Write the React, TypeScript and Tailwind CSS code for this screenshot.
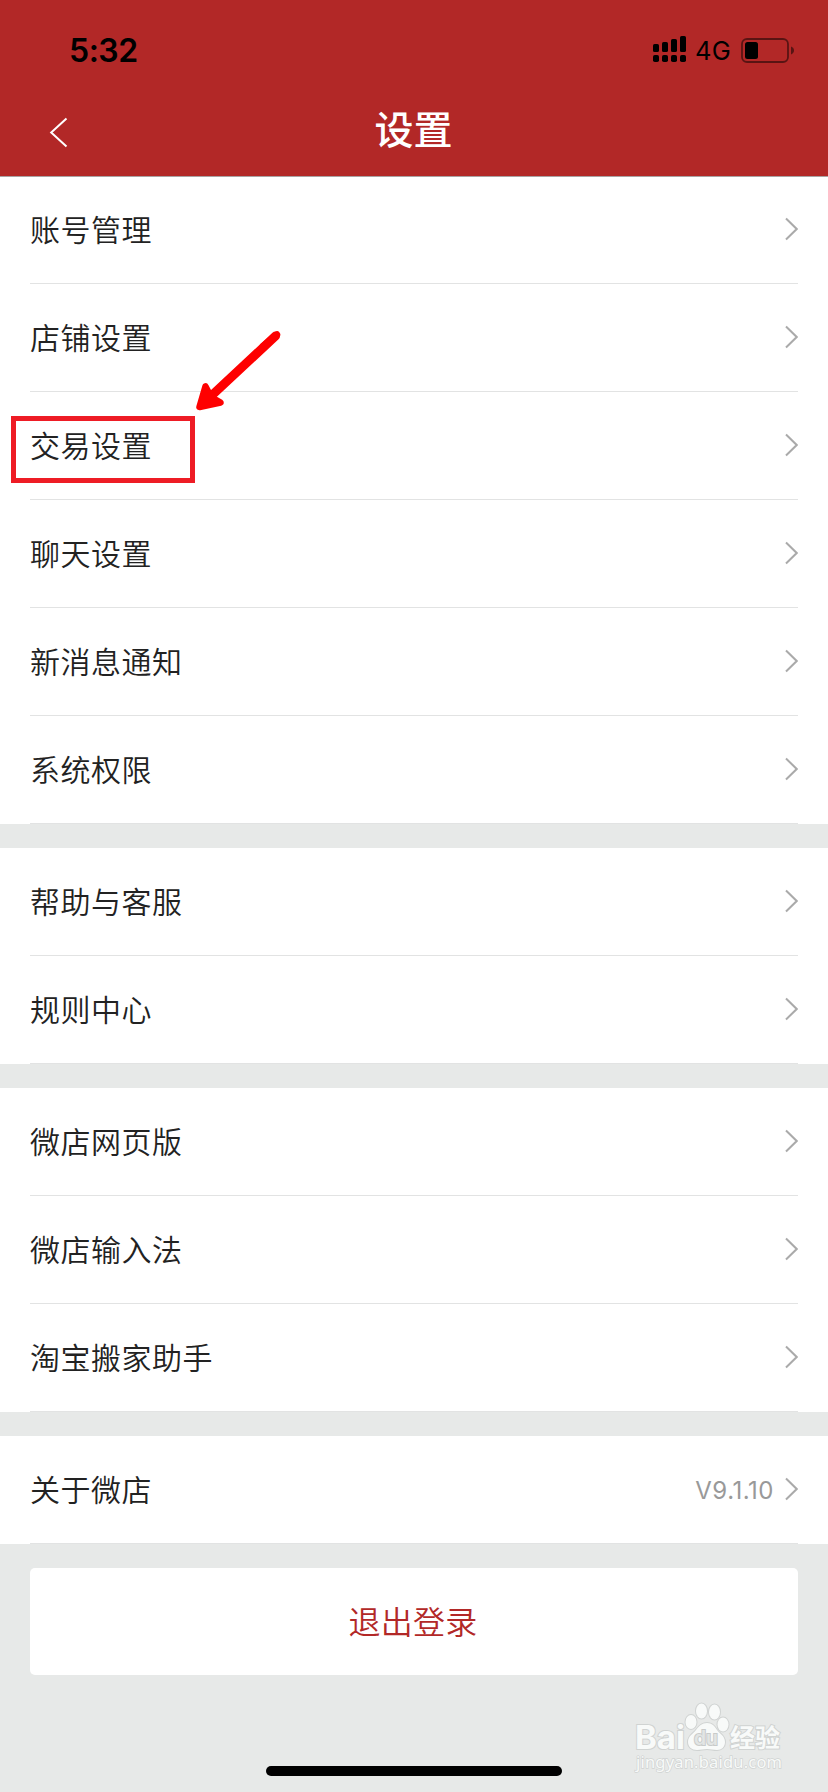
type Item = {
  label: string;
  value?: string;
};

const groups: Item[][] = [
  [
    { label: "账号管理" },
    { label: "店铺设置" },
    { label: "交易设置" },
    { label: "聊天设置" },
    { label: "新消息通知" },
    { label: "系统权限" },
  ],
  [{ label: "帮助与客服" }, { label: "规则中心" }],
  [{ label: "微店网页版" }, { label: "微店输入法" }, { label: "淘宝搬家助手" }],
  [{ label: "关于微店", value: "V9.1.10" }],
];

function StatusBar() {
  return (
    <div className="flex h-[100px] items-center justify-between pl-[69px] pr-[33px] font-['Inter',sans-serif] text-black">
      <span className="pt-px text-[32px] font-semibold leading-none tracking-[-0.5px]">5:32</span>
      <div className="flex items-center pb-px">
        <svg className="h-[27px] w-[33px]" viewBox="0 0 33 27">
          <rect x="0" y="8" width="6" height="8" rx="1.6" />
          <rect x="9" y="6" width="6" height="10" rx="1.6" />
          <rect x="18" y="3" width="6" height="13" rx="1.6" />
          <rect x="27" y="0" width="6" height="16" rx="1.6" />
          <rect x="0" y="19" width="6" height="7" rx="1.8" />
          <rect x="9" y="19" width="6" height="7" rx="1.8" />
          <rect x="18" y="19" width="6" height="7" rx="1.8" />
          <rect x="27" y="19" width="6" height="7" rx="1.8" />
        </svg>
        <span className="ml-[9px] w-[36px] pt-[2px] text-[25.5px] leading-none tracking-[0.4px]">4G</span>
        <svg className="ml-[10px] mt-px h-[25px] w-[54px]" viewBox="0 0 54 25">
          <rect x="1" y="1" width="46" height="23" rx="5" fill="none" stroke="#000" strokeOpacity="0.5" strokeWidth="1.8" />
          <rect x="4" y="4" width="13" height="17" rx="2.5" />
          <path d="M50 8.500c2 .8 3 2.200 3 4s-1 3.200-3 4z" fillOpacity="0.5" />
        </svg>
      </div>
    </div>
  );
}

function Header() {
  return (
    <header className="relative z-10 h-[177px] border-b border-[#a9a3a3] bg-[#b22827]">
      <StatusBar />
      <div className="grid h-[64px] grid-cols-3 items-center">
        <svg className="ml-[49px] h-[31px] w-[19px]" viewBox="0 0 19 31" fill="none" stroke="#fff" strokeWidth="2">
          <path d="M17.500 1.500 2.200 15.500l15.300 14" />
        </svg>
        <h1 className="pb-[9px] pr-px text-center text-[39px] font-medium leading-none text-white">设置</h1>
      </div>
    </header>
  );
}

function Row({ label, value }: Item) {
  return (
    <div className="mx-[30px] flex h-[108px] items-center justify-between border-b border-[#e2e3e3]">
      <span className="pb-[3px] text-[30px] font-[350] leading-none tracking-[0.5px] text-[#222]">{label}</span>
      <div className="flex items-center gap-[11px]">
        {value && (
          <span className="pt-[2px] font-['Inter',sans-serif] text-[24px] leading-none tracking-[0.5px] text-[#999]">{value}</span>
        )}
        <svg className="mb-[2px] h-[24px] w-[13px]" viewBox="0 0 13 24" fill="none" stroke="#aaa" strokeWidth="2">
          <path d="M1 1.500 11.700 12 1 22.500" />
        </svg>
      </div>
    </div>
  );
}

// Hand-drawn marker around the highlighted row
function Marker() {
  return (
    <>
      <div className="absolute left-[11px] top-[416px] z-20 h-[67px] w-[184px] border-5 border-[#ee1c25]" />
      <svg
        className="absolute left-[190px] top-[325px] z-20 h-[90px] w-[100px]"
        viewBox="0 0 100 90"
        fill="#fe0000"
        stroke="#fe0000"
        strokeLinecap="round"
        strokeLinejoin="round"
      >
        <path d="M87 9.500 73 21" fill="none" stroke="#fe0000" strokeWidth="6.500" />
        <path d="M85.500 11 19 73" fill="none" strokeWidth="9" />
        <path d="M15.500 61.500 9.500 82 30.500 77.500 21 72z" strokeWidth="6.500" />
      </svg>
    </>
  );
}

function Watermark() {
  return (
    <svg
      className="absolute left-[620px] top-[1690px] h-[90px] w-[180px]"
      viewBox="0 0 180 90"
      fill="#f8faf9"
      stroke="#d0d3d2"
      strokeWidth="2"
      paintOrder="stroke"
    >
      <text x="15" y="59" textLength="50" lengthAdjust="spacingAndGlyphs" fontFamily="Inter, sans-serif" fontSize="33" fontWeight="700">
        Bai
      </text>
      <ellipse cx="71" cy="32" rx="5.500" ry="7" />
      <ellipse cx="81.500" cy="21" rx="5.500" ry="7.500" />
      <ellipse cx="94.500" cy="22" rx="5.500" ry="7.500" />
      <ellipse cx="103" cy="34.500" rx="5.500" ry="7" />
      <path d="M87 33c5 0 7.500 3 10 7 3 4 8 6 8 12 0 5-3.500 8-8 8-4 0-6-1-10-1s-6 1-10 1c-5 0-9-3-9-8 0-6 5-8 8-12 3-4 6-7 11-7z" />
      <text x="74" y="55" textLength="24" lengthAdjust="spacingAndGlyphs" fontFamily="Inter, sans-serif" fontSize="20" fontWeight="600" fill="#e2e5e4" stroke="#c8cbca">
        du
      </text>
      <text x="110" y="57" textLength="50" lengthAdjust="spacingAndGlyphs" fontFamily="Noto Sans CJK SC, sans-serif" fontSize="25" fontWeight="700">
        经验
      </text>
      <text x="16" y="78" textLength="146" fontFamily="Noto Sans, sans-serif" fontSize="16.500" strokeWidth="1.4">
        jingyan.baidu.com
      </text>
    </svg>
  );
}

export default function App() {
  return (
    <div className="relative flex h-[1792px] w-[828px] flex-col overflow-hidden bg-[#e7e9e8] font-['Noto_Sans_CJK_SC',sans-serif]">
      <Header />

      {/* The list starts under the header's hairline */}
      <main className="-mt-px flex flex-col gap-6">
        {groups.map((items, i) => (
          <section key={i} className="bg-white">
            {items.map((item) => (
              <Row key={item.label} {...item} />
            ))}
          </section>
        ))}
        <button className="mx-[30px] h-[107px] rounded-[5px] bg-white pb-[4px] pr-[2px] text-[32px] font-[350] leading-none tracking-[0.3px] text-[#b22827]">
          退出登录
        </button>
      </main>

      <div className="mb-4 mt-auto h-[10px] w-[296px] self-center rounded-full bg-black" />

      <Marker />
      <Watermark />
    </div>
  );
}
